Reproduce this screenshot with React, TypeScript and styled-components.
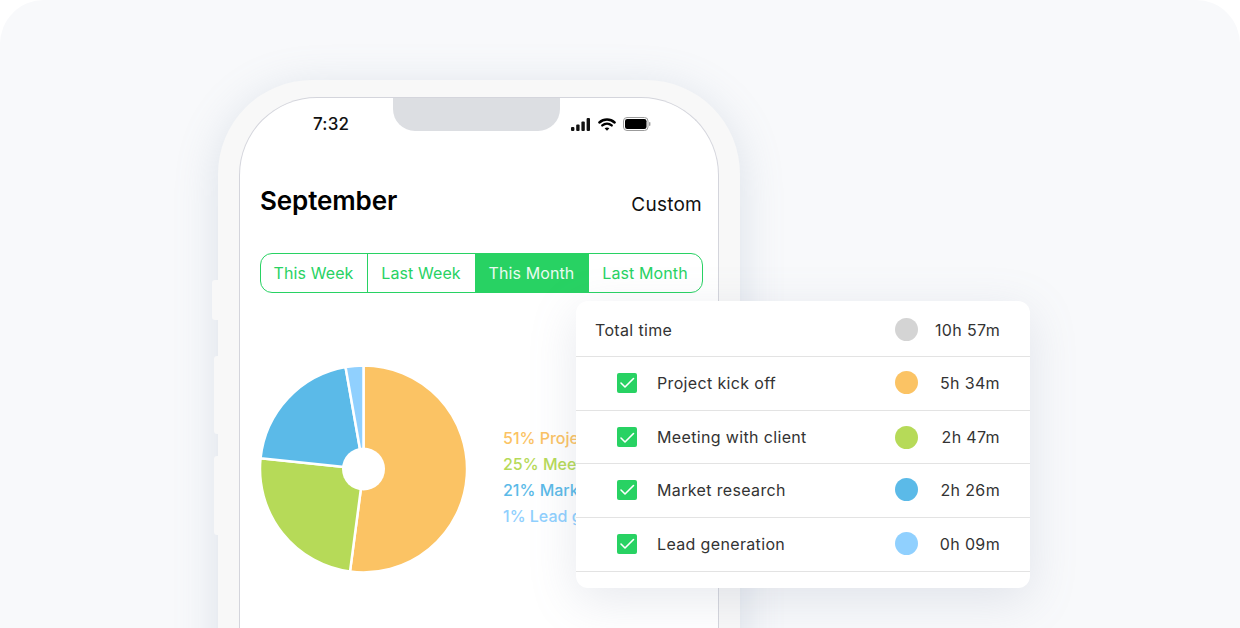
import styled, { createGlobalStyle } from 'styled-components'

const GlobalStyle = createGlobalStyle`
  html, body {
    margin: 0;
    padding: 0;
    background: #ffffff;
  }
  body {
    font-family: 'Inter', 'Liberation Sans', sans-serif;
  }
`

const Panel = styled.div`
  position: relative;
  width: 1240px;
  height: 628px;
  box-sizing: border-box;
  padding: 80px 0 0 218px;
  background: #f8f9fb;
  border-radius: 44px 44px 0 0;
  overflow: hidden;
`

const Phone = styled.div`
  position: relative;
  width: 522px;
  height: 620px;
  box-sizing: border-box;
  padding: 17px 21px 0;
  background: #f8f8f8;
  border-radius: 94px 94px 0 0;
  box-shadow: 0 8px 44px rgba(130, 150, 175, 0.24);
`

const SideButton = styled.div<{ $top: number; $height: number; $width: number }>`
  position: absolute;
  left: -${p => p.$width}px;
  top: ${p => p.$top}px;
  width: ${p => p.$width}px;
  height: ${p => p.$height}px;
  background: #f8f8f8;
  border-radius: 3px 0 0 3px;
`

const Screen = styled.div`
  position: relative;
  height: 100%;
  box-sizing: border-box;
  padding: 0 15px 0 20px;
  background: #ffffff;
  border: 1px solid #d4d5dc;
  border-bottom: none;
  border-radius: 78px 78px 0 0;
`

const Notch = styled.div`
  position: absolute;
  top: 0;
  left: 153px;
  width: 167px;
  height: 33px;
  background: #dcdee2;
  border-radius: 0 0 22px 22px;
`

const StatusBar = styled.div`
  display: flex;
  align-items: center;
  justify-content: space-between;
  height: 52px;
  padding: 0 52px 0 53px;
`

const Clock = styled.div`
  font-size: 17px;
  font-weight: 500;
  letter-spacing: 0.2px;
  color: #111111;
`

const StatusIcons = styled.div`
  display: flex;
  align-items: center;
  gap: 7px;
`

const Header = styled.div`
  display: flex;
  align-items: flex-end;
  justify-content: space-between;
  height: 66px;
`

const Title = styled.div`
  font-size: 26px;
  font-weight: 600;
  line-height: 32px;
  letter-spacing: -0.1px;
  color: #000000;
  margin-bottom: -1px;
`

const CustomLink = styled.div`
  font-size: 19px;
  line-height: 24px;
  letter-spacing: 0.25px;
  margin: 0 1px -1px 0;
  color: #111111;
`

const Tabs = styled.div`
  display: flex;
  height: 40px;
  box-sizing: border-box;
  margin-top: 37px;
  border: 1px solid #28d263;
  border-radius: 12px;
  overflow: hidden;
`

const Tab = styled.div<{ $active?: boolean; $width: number }>`
  display: flex;
  align-items: center;
  justify-content: center;
  box-sizing: border-box;
  width: ${p => p.$width}px;
  padding-right: 1px;
  font-size: 16px;
  letter-spacing: 0.1px;
  color: ${p => (p.$active ? '#eafbf0' : '#28d263')};
  background: ${p => (p.$active ? '#28d263' : 'transparent')};
  & + & {
    border-left: 1px solid #28d263;
  }
`

const ChartRow = styled.div`
  display: flex;
  align-items: center;
  gap: 35px;
  margin-top: 72px;
`

const Legend = styled.div`
  display: flex;
  flex-direction: column;
  gap: 6px;
  margin-top: 16px;
  white-space: nowrap;
`

const LegendItem = styled.div<{ $color: string }>`
  font-size: 16px;
  font-weight: 500;
  line-height: 20px;
  color: ${p => p.$color};
`

const Card = styled.div`
  position: absolute;
  left: 576px;
  top: 301px;
  width: 454px;
  height: 287px;
  background: #ffffff;
  border-radius: 12px;
  box-shadow: 0 12px 48px rgba(120, 135, 160, 0.18);
`

const Row = styled.div<{ $height: number; $indent: number; $top?: number; $bottom?: number }>`
  display: flex;
  align-items: center;
  height: ${p => p.$height}px;
  box-sizing: border-box;
  padding: ${p => p.$top ?? 0}px 30px ${p => p.$bottom ?? 0}px ${p => p.$indent}px;
  border-bottom: 1px solid #e3e3e3;
  font-size: 16px;
  letter-spacing: 0.35px;
  color: #333333;
`

const Check = styled.div`
  display: flex;
  align-items: center;
  justify-content: center;
  width: 20px;
  height: 20px;
  margin-right: 20px;
  background: #28d263;
  border-radius: 2px;
`

const RowLabel = styled.div`
  flex: 1;
`

const Dot = styled.div<{ $color: string }>`
  width: 23px;
  height: 23px;
  border-radius: 50%;
  background: ${p => p.$color};
`

const Duration = styled.div`
  width: 82px;
  text-align: right;
`

const ORANGE = '#fbc364'
const GREEN = '#b6da58'
const BLUE = '#5bbae8'
const SKY = '#90d0fe'

const slices = [
  { color: ORANGE, from: 0, to: 187.5 },
  { color: GREEN, from: 187.5, to: 276 },
  { color: BLUE, from: 276, to: 350 },
  { color: SKY, from: 350, to: 360 },
]

const legend = [
  { color: ORANGE, text: '51% Project kick off' },
  { color: GREEN, text: '25% Meeting with client' },
  { color: BLUE, text: '21% Market research' },
  { color: SKY, text: '1% Lead generation' },
]

const rows = [
  { color: ORANGE, label: 'Project kick off', time: '5h 34m', height: 54, bottom: 2 },
  { color: GREEN, label: 'Meeting with client', time: '2h 47m', height: 53, bottom: 0 },
  { color: BLUE, label: 'Market research', time: '2h 26m', height: 54, bottom: 2 },
  { color: SKY, label: 'Lead generation', time: '0h 09m', height: 54, bottom: 2 },
]

function slicePath(from: number, to: number) {
  const point = (deg: number) => {
    const rad = (deg * Math.PI) / 180
    return `${(103.5 + 103.5 * Math.sin(rad)).toFixed(2)} ${(104 - 103.5 * Math.cos(rad)).toFixed(2)}`
  }
  const large = to - from > 180 ? 1 : 0
  return `M103.5 104 L${point(from)} A103.5 103.5 0 ${large} 1 ${point(to)} Z`
}

function PieChart() {
  return (
    <svg width="208" height="208" viewBox="0 0 208 208" style={{ flexShrink: 0 }}>
      {slices.map(s => (
        <path key={s.color} d={slicePath(s.from, s.to)} fill={s.color} stroke="#fff" strokeWidth="2.5" strokeLinejoin="round" />
      ))}
      <circle cx="103.5" cy="104" r="21.5" fill="#fff" />
    </svg>
  )
}

function SignalIcon() {
  return (
    <svg width="20" height="13" viewBox="0 0 20 13" fill="#111">
      <rect x="0" y="9" width="3.4" height="4" rx="1" />
      <rect x="5.2" y="6.5" width="3.4" height="6.5" rx="1" />
      <rect x="10.4" y="3.5" width="3.4" height="9.5" rx="1" />
      <rect x="15.6" y="0" width="3.4" height="13" rx="1" />
    </svg>
  )
}

function WifiIcon() {
  return (
    <svg width="18" height="13" viewBox="0 0 18 13" fill="none" stroke="#000" strokeWidth="2.4" strokeLinecap="round">
      <path d="M1.4 4.5 C5.7 0.5 12.3 0.5 16.6 4.5" />
      <path d="M4.3 7.4 C7.1 5 10.9 5 13.7 7.4" />
      <path d="M9 12.8 L6.6 10.2 C8 9.1 10 9.1 11.4 10.2 Z" fill="#000" stroke="none" />
    </svg>
  )
}

function BatteryIcon() {
  return (
    <svg width="28" height="14" viewBox="0 0 28 14">
      <rect x="0.5" y="0.5" width="24.5" height="13" rx="3.5" fill="none" stroke="#9b9b9b" />
      <rect x="2" y="2" width="21.5" height="10" rx="2.2" fill="#000" />
      <rect x="26" y="5" width="1.4" height="4" rx="0.7" fill="#9b9b9b" />
    </svg>
  )
}

function CheckIcon() {
  return (
    <svg width="16" height="13" viewBox="0 0 16 13" fill="none" stroke="#fff" strokeWidth="1.6" strokeLinecap="round" strokeLinejoin="round">
      <path d="M2 7 L6 11 L14.5 2.5" />
    </svg>
  )
}

export default function App() {
  return (
    <>
      <GlobalStyle />
      <Panel>
        <Phone>
          <SideButton $top={200} $height={40} $width={6} />
          <SideButton $top={276} $height={78} $width={4} />
          <SideButton $top={376} $height={79} $width={4} />
          <Screen>
            <Notch />
            <StatusBar>
              <Clock>7:32</Clock>
              <StatusIcons>
                <SignalIcon />
                <WifiIcon />
                <BatteryIcon />
              </StatusIcons>
            </StatusBar>
            <Header>
              <Title>September</Title>
              <CustomLink>Custom</CustomLink>
            </Header>
            <Tabs>
              <Tab $width={106}>This Week</Tab>
              <Tab $width={108}>Last Week</Tab>
              <Tab $width={113} $active>This Month</Tab>
              <Tab $width={114}>Last Month</Tab>
            </Tabs>
            <ChartRow>
              <PieChart />
              <Legend>
                {legend.map(l => (
                  <LegendItem key={l.text} $color={l.color}>{l.text}</LegendItem>
                ))}
              </Legend>
            </ChartRow>
          </Screen>
        </Phone>
        <Card>
          <Row $height={56} $indent={19} $top={2}>
            <RowLabel>Total time</RowLabel>
            <Dot $color="#d4d4d4" />
            <Duration>10h 57m</Duration>
          </Row>
          {rows.map(r => (
            <Row key={r.label} $height={r.height} $indent={41} $bottom={r.bottom}>
              <Check><CheckIcon /></Check>
              <RowLabel>{r.label}</RowLabel>
              <Dot $color={r.color} />
              <Duration>{r.time}</Duration>
            </Row>
          ))}
        </Card>
      </Panel>
    </>
  )
}
